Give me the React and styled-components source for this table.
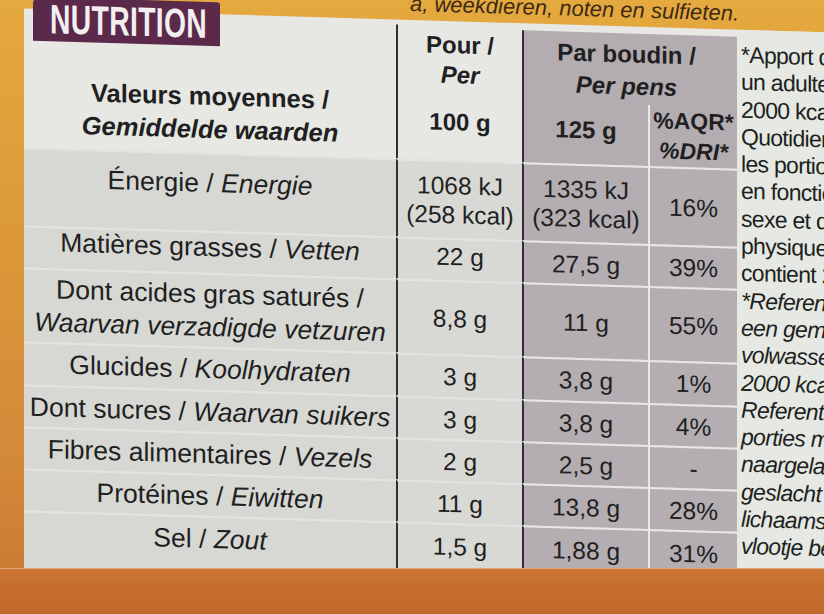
import React from 'react';
import styled, { createGlobalStyle } from 'styled-components';

const Global = createGlobalStyle`
  *, *::before, *::after { box-sizing: border-box; }
  html, body { margin: 0; padding: 0; }
  body {
    width: 824px;
    height: 614px;
    overflow: hidden;
    font-family: "Liberation Sans", Arial, sans-serif;
  }
`;

const Page = styled.div`
  width: 824px;
  height: 614px;
  overflow: hidden;
  display: flex;
  flex-direction: column;
  background: linear-gradient(180deg, #e4a93f 0%, #dc9838 40%, #d3893a 75%, #c8762f 100%);
`;

const Sheet = styled.div`
  flex: none;
  display: flex;
  flex-direction: column;
  padding-left: 24px;
  transform: skewY(1.7deg);
  transform-origin: 412px 0;
`;

const Caption = styled.div`
  height: 20px;
  padding-left: 386px;
  white-space: nowrap;
  font-style: italic;
  font-size: 22px;
  line-height: 22px;
  color: #3d2a14;
`;

const CaptionText = styled.div`
  margin-top: -7px;
`;

const Panel = styled.div`
  display: grid;
  width: 823px;
  grid-template-columns: 372px 126px 126px 89px 110px;
  grid-template-rows: 139px 78px 42px 74px 43px 42px 42px 42px 58px;
  background: #e7e8e4;
  color: #211f21;
`;

const HeadLabelCell = styled.div`
  display: flex;
  flex-direction: column;
  align-items: flex-start;
`;

const Tab = styled.div`
  width: 187px;
  height: 44px;
  margin: -12px 0 0 9px;
  padding-left: 17px;
  display: flex;
  align-items: center;
  background: #5b2a4b;
  border-radius: 7px 3px 0 0;
`;

const TabText = styled.span`
  display: inline-block;
  width: 153px;
  font-weight: 700;
  font-size: 41px;
  line-height: 1;
  color: #f3eff1;
  letter-spacing: 0.5px;
  transform: scaleX(0.69);
  transform-origin: left center;
  white-space: nowrap;
`;

const HeadLabel = styled.div`
  align-self: stretch;
  margin-top: 34px;
  text-align: center;
  font-weight: 700;
  font-size: 25.5px;
  line-height: 33px;
  white-space: nowrap;
`;

const Head100 = styled.div`
  margin-top: 5px;
  padding-top: 4px;
  border-left: 2px solid #352d33;
  display: flex;
  flex-direction: column;
  align-items: center;
  font-weight: 700;
  font-size: 24px;
  line-height: 30px;
`;

const HeadAmount = styled.div`
  margin-top: 17px;
`;

const PortionHead = styled.div`
  grid-column: span 2;
  margin-top: 7px;
  border-left: 2px solid #352d33;
  background: #b3acb0;
  display: grid;
  grid-template-columns: 124px 89px;
  grid-template-rows: 71px 1fr;
  font-weight: 700;
  font-size: 24px;
`;

const PortionTitle = styled.div`
  grid-column: span 2;
  padding-top: 5px;
  padding-right: 8px;
  text-align: center;
  line-height: 32px;
`;

const PortionSub = styled.div`
  display: flex;
  flex-direction: column;
  align-items: center;
  justify-content: center;
  line-height: 30px;
  padding-bottom: ${p => (p.$pct ? '4px' : '10px')};
  border-left: ${p => (p.$pct ? '2px solid #e9e9e9' : 'none')};
  font-size: ${p => (p.$pct ? '23px' : '24px')};
`;

const LabelCell = styled.div`
  display: flex;
  flex-direction: column;
  align-items: center;
  justify-content: ${p => (p.$top ? 'flex-start' : 'center')};
  padding-top: ${p => (p.$top ? '12px' : '0')};
  padding-bottom: ${p => (p.$last ? '14px' : p.$up ? '12px' : '0')};
  background: #d7d8d4;
  border-top: 2px solid #e3e4e0;
  font-size: 26.5px;
  line-height: 33px;
  white-space: nowrap;
`;

const ValueCell = styled.div`
  display: flex;
  flex-direction: column;
  align-items: center;
  justify-content: center;
  padding-bottom: ${p => (p.$last ? '14px' : p.$up ? '8px' : '0')};
  background: ${p => (p.$shade ? '#b4adb1' : '#d8d8d5')};
  border-top: 2px solid ${p => (p.$shade ? '#e8e8e8' : '#e3e3e0')};
  border-left: 2px solid ${p => (p.$pct ? '#e8e8e8' : '#352d33')};
  font-size: 24.5px;
  line-height: 29px;
  white-space: nowrap;
`;

const It = styled.em`
  font-style: italic;
`;

const Footnote = styled.div`
  grid-column: 5;
  grid-row: 1 / -1;
  padding: 12px 0 0 4px;
  background: #e6e9e3;
  overflow: hidden;
  white-space: nowrap;
  font-size: 23px;
  line-height: 27.3px;
  letter-spacing: -0.7px;
`;

const FootLine = styled.div`
  font-style: ${p => (p.$it ? 'italic' : 'normal')};
`;

const BottomBand = styled.div`
  position: relative;
  z-index: 1;
  flex: none;
  height: 46px;
  margin-top: -12px;
  background: linear-gradient(180deg, #cc7632 0%, #c46d2c 50%, #c0692b 100%);
  border-top: 1px solid #d8a57c;
`;

const rows = [
  { fr: 'Énergie', nl: 'Energie', v100: ['1068 kJ', '(258 kcal)'], vp: ['1335 kJ', '(323 kcal)'], pct: '16%', top: true },
  { fr: 'Matières grasses', nl: 'Vetten', v100: ['22 g'], vp: ['27,5 g'], pct: '39%', up: true },
  { fr: 'Dont acides gras saturés', nl: 'Waarvan verzadigde vetzuren', split: true, v100: ['8,8 g'], vp: ['11 g'], pct: '55%' },
  { fr: 'Glucides', nl: 'Koolhydraten', v100: ['3 g'], vp: ['3,8 g'], pct: '1%' },
  { fr: 'Dont sucres', nl: 'Waarvan suikers', v100: ['3 g'], vp: ['3,8 g'], pct: '4%' },
  { fr: 'Fibres alimentaires', nl: 'Vezels', v100: ['2 g'], vp: ['2,5 g'], pct: '-' },
  { fr: 'Protéines', nl: 'Eiwitten', v100: ['11 g'], vp: ['13,8 g'], pct: '28%' },
  { fr: 'Sel', nl: 'Zout', v100: ['1,5 g'], vp: ['1,88 g'], pct: '31%' },
];

const footnotes = [
  ['*Apport de référence pour', false],
  ['un adulte type (8400 kJ /', false],
  ['2000 kcal). Apports', false],
  ['Quotidiens Recommandés :', false],
  ['les portions doivent être', false],
  ['en fonction de l’âge, du', false],
  ['sexe et de l’activité', false],
  ['physique. L’emballage', false],
  ['contient 2 portions.', false],
  ['*Referentie-inname van', true],
  ['een gemiddelde', true],
  ['volwassene (8400 kJ /', true],
  ['2000 kcal). Dagelijkse', true],
  ['Referentie-inname: de', true],
  ['porties moeten worden', true],
  ['naargelang leeftijd,', true],
  ['geslacht en', true],
  ['lichaamsactiviteit. Het', true],
  ['vlootje bevat 2 porties.', true],
];

export default function App() {
  return (
    <>
      <Global />
      <Page>
        <Sheet>
          <Caption>
            <CaptionText>a, weekdieren, noten en sulfieten.</CaptionText>
          </Caption>
          <Panel>
            <HeadLabelCell>
              <Tab>
                <TabText>NUTRITION</TabText>
              </Tab>
              <HeadLabel>
                <div>Valeurs moyennes /</div>
                <It>Gemiddelde waarden</It>
              </HeadLabel>
            </HeadLabelCell>
            <Head100>
              <div>Pour /</div>
              <It>Per</It>
              <HeadAmount>100 g</HeadAmount>
            </Head100>
            <PortionHead>
              <PortionTitle>
                <div>Par boudin /</div>
                <It>Per pens</It>
              </PortionTitle>
              <PortionSub>125 g</PortionSub>
              <PortionSub $pct>
                <div>%AQR*</div>
                <It>%DRI*</It>
              </PortionSub>
            </PortionHead>
            <Footnote>
              {footnotes.map(([t, it], i) => (
                <FootLine key={i} $it={it}>{t}</FootLine>
              ))}
            </Footnote>
            {rows.map((r, i) => {
              const last = i === rows.length - 1;
              return (
                <React.Fragment key={r.fr}>
                  <LabelCell $top={r.top} $up={r.up} $last={last}>
                    {r.split ? (
                      <>
                        <div>{r.fr} /</div>
                        <It>{r.nl}</It>
                      </>
                    ) : (
                      <div>
                        {r.fr} / <It>{r.nl}</It>
                      </div>
                    )}
                  </LabelCell>
                  <ValueCell $up={r.up} $last={last}>
                    {r.v100.map(v => <div key={v}>{v}</div>)}
                  </ValueCell>
                  <ValueCell $shade $last={last}>
                    {r.vp.map(v => <div key={v}>{v}</div>)}
                  </ValueCell>
                  <ValueCell $shade $pct $last={last}>
                    <div>{r.pct}</div>
                  </ValueCell>
                </React.Fragment>
              );
            })}
          </Panel>
        </Sheet>
        <BottomBand />
      </Page>
    </>
  );
}
